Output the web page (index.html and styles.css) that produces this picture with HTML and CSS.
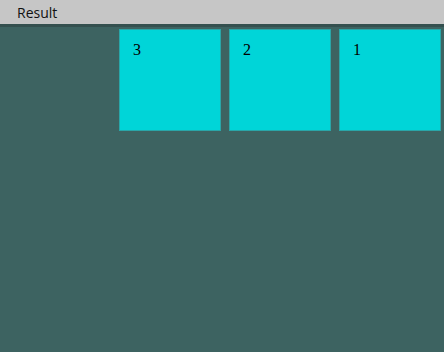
FILE: index.html
```html
<!DOCTYPE html>
<html>
<head>
<meta charset="utf-8">
<link rel="stylesheet" href="styles.css">
</head>
<body>
<div class="bar"><span class="title">Result</span></div>
<div class="stage">
  <div class="row">
    <div class="box">1</div>
    <div class="box">2</div>
    <div class="box">3</div>
  </div>
</div>
</body>
</html>
```
FILE: styles.css
```css
html, body { margin: 0; padding: 0; }
body { width: 444px; height: 352px; background: #3d6361; overflow: hidden; }
.bar {
  height: 24px;
  background: #c6c6c6;
  border-bottom: 3px solid #34504f;
  display: flex;
  align-items: center;
  padding-left: 17px;
  font-family: "Open Sans", "Noto Sans", sans-serif;
  font-size: 14px;
  color: #111;
}
.stage { padding: 2px 0 0 0; }
.row { display: flex; flex-direction: row-reverse; }
.box {
  box-sizing: border-box;
  width: 102px;
  height: 102px;
  margin: 0 3px 0 5px;
  background: #00d5d8;
  border: 1px solid #2aa6a8;
  padding: 11px 13px;
  font-family: "Liberation Serif", "Times New Roman", serif;
  font-size: 16px;
  line-height: 18px;
  color: #000;
}
```
